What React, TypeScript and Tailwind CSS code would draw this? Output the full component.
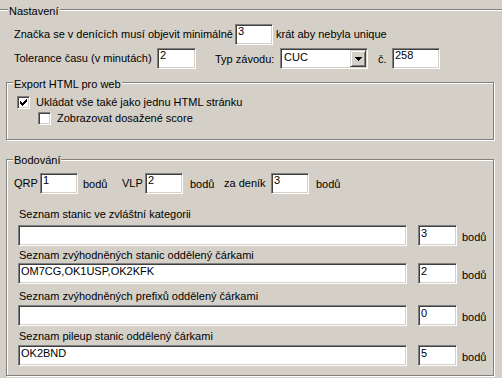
import React from "react";

const sunken =
  "bg-white border border-t-[#808080] border-l-[#808080] border-b-white border-r-white shadow-[inset_1px_1px_0_#404040,inset_-1px_-1px_0_#d4d0c8]";
const etched = "border border-[#808080] shadow-[inset_1px_1px_0_#fff,1px_1px_0_#fff]";

function Edit({ value = "", className = "" }: { value?: string; className?: string }) {
  return <div className={`h-[21px] shrink-0 pl-[2px] whitespace-nowrap ${sunken} ${className}`}>{value}</div>;
}

function Combo({ value }: { value: string }) {
  return (
    <div className={`flex h-[21px] w-[88px] shrink-0 ${sunken}`}>
      <span className="flex-1 pl-[3px] pt-[2px]">{value}</span>
      <div className="mt-[1px] mr-[1px] flex h-[17px] w-[16px] items-center justify-center bg-[#d4d0c8] border border-t-[#d4d0c8] border-l-[#d4d0c8] border-b-[#404040] border-r-[#404040] shadow-[inset_1px_1px_0_#fff,inset_-1px_-1px_0_#808080]">
        <svg width="7" height="4" viewBox="0 0 7 4" shapeRendering="crispEdges">
          <path d="M0 0h7v1h-1v1h-1v1h-1v1h-1v-1h-1v-1h-1v-1h-1z" fill="#000" />
        </svg>
      </div>
    </div>
  );
}

function Check({ checked }: { checked?: boolean }) {
  const cols = [2, 3, 4, 3, 2, 1, 0];
  return (
    <div className={`relative h-[13px] w-[13px] shrink-0 ${sunken}`}>
      {checked && (
        <svg className="absolute left-[2px] top-[2px]" width="7" height="7" viewBox="0 0 7 7" shapeRendering="crispEdges">
          {cols.map((y, x) => (
            <rect key={x} x={x} y={y} width="1" height="3" fill="#000" />
          ))}
        </svg>
      )}
    </div>
  );
}

function ListRow({ label, value, points, labelTop, inputTop }: { label: string; value: string; points: string; labelTop: string; inputTop: string }) {
  return (
    <>
      <div className={`pl-[12px] ${labelTop}`}>{label}</div>
      <div className={`flex items-center ${inputTop}`}>
        <Edit value={value} className="ml-[11px] w-[389px] pt-px" />
        <Edit value={points} className="ml-[11px] w-[39px] pt-px" />
        <span className="ml-[5px] mt-[4px]">bodů</span>
      </div>
    </>
  );
}

export default function App() {
  return (
    <div className="h-[378px] w-[502px] overflow-hidden bg-[#d4d0c8] text-[11px] leading-[13px] text-black font-['Liberation_Sans',Arial,sans-serif]">
      {/* Nastavení */}
      <div className="relative mt-[9px] border-t border-[#808080] shadow-[inset_0_1px_0_#fff]">
        <span className="absolute left-[8px] -top-[5px] bg-[#d4d0c8] px-[1px]">Nastavení</span>
        <div className="mt-[14px] flex h-[21px] items-center pl-[14px]">
          <span className="w-[221px] shrink-0 whitespace-nowrap">Značka se v denících musí objevit minimálně</span>
          <Edit value="3" className="w-[38px]" />
          <span className="ml-[3px]">krát aby nebyla unique</span>
        </div>
        <div className="mt-[3px] flex h-[21px] items-center pl-[14px]">
          <span className="w-[143px] shrink-0 whitespace-nowrap">Tolerance času (v minutách)</span>
          <Edit value="2" className="w-[39px]" />
          <span className="ml-[19px] w-[65px] shrink-0 mt-[2px]">Typ závodu:</span>
          <Combo value="CUC" />
          <span className="ml-[10px] w-[14px] shrink-0 mt-[2px]">č.</span>
          <Edit value="258" className="w-[48px]" />
        </div>
      </div>

      {/* Export HTML pro web */}
      <div className={`relative mt-[13px] ml-[6px] h-[58px] w-[488px] ${etched}`}>
        <span className="absolute left-[6px] -top-[5px] bg-[#d4d0c8] px-[1px]">Export HTML pro web</span>
        <div className="mt-[13px] flex items-center pl-[10px]">
          <Check checked />
          <span className="ml-[6px]">Ukládat vše také jako jednu HTML stránku</span>
        </div>
        <div className="mt-[3px] flex items-center pl-[31px]">
          <Check />
          <span className="ml-[6px]">Zobrazovat dosažené score</span>
        </div>
      </div>

      {/* Bodování */}
      <div className={`relative mt-[19px] ml-[6px] h-[217px] w-[488px] ${etched}`}>
        <span className="absolute left-[6px] -top-[6px] bg-[#d4d0c8] px-[1px]">Bodování</span>
        <div className="mt-[13px] flex h-[21px] items-center pl-[7px]">
          <span className="w-[26px] shrink-0">QRP</span>
          <Edit value="1" className="w-[38px]" />
          <span className="ml-[5px] w-[39px] shrink-0 mt-[2px]">bodů</span>
          <span className="w-[23px] shrink-0">VLP</span>
          <Edit value="2" className="w-[38px]" />
          <span className="ml-[7px] w-[34px] shrink-0 mt-[2px]">bodů</span>
          <span className="w-[47px] shrink-0 whitespace-nowrap">za deník</span>
          <Edit value="3" className="w-[38px]" />
          <span className="ml-[7px] mt-[2px]">bodů</span>
        </div>
        <ListRow label="Seznam stanic ve zvláštní kategorii" value="" points="3" labelTop="mt-[14px]" inputTop="mt-[4px]" />
        <ListRow label="Seznam zvýhodněných stanic oddělený čárkami" value="OM7CG,OK1USP,OK2KFK" points="2" labelTop="mt-[3px]" inputTop="mt-[1px]" />
        <ListRow label="Seznam zvýhodněných prefixů oddělený čárkami" value="" points="0" labelTop="mt-[6px]" inputTop="mt-[2px]" />
        <ListRow label="Seznam pileup stanic oddělený čárkami" value="OK2BND" points="5" labelTop="mt-[4px]" inputTop="mt-[2px]" />
      </div>
    </div>
  );
}
